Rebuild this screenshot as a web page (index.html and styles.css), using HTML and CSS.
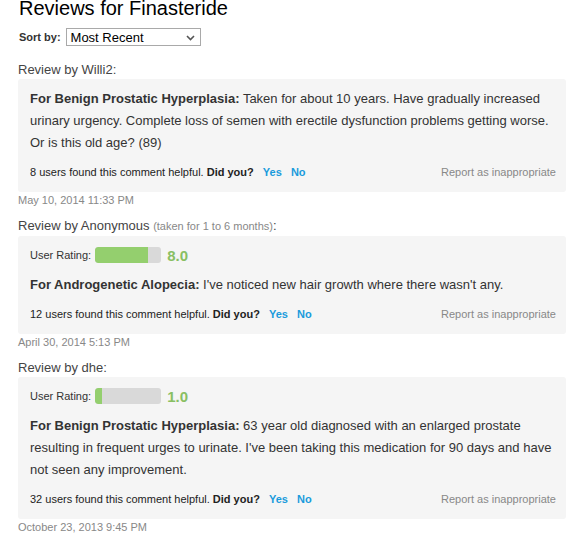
FILE: index.html
```html
<!DOCTYPE html>
<html>
<head>
  <title>Reviews for Finasteride</title>
  <link rel="stylesheet" href="styles.css">
</head>
<body>
  <h1 class="page-title">Reviews for Finasteride</h1>

  <div class="sort-row">
    <label for="sort">Sort by:</label>
    <div class="select-box">
      <span>Most Recent</span>
      <svg class="caret" width="9" height="6" viewBox="0 0 9 6"><path d="M1 1 L4.5 4.5 L8 1" fill="none" stroke="#555" stroke-width="1.6"/></svg>
    </div>
  </div>

  <!-- Review 1 -->
  <div class="review">
    <div class="review-by">Review by Willi2:</div>
    <div class="review-box">
      <p class="comment"><b>For Benign Prostatic Hyperplasia:</b> Taken for about 10 years. Have gradually increased urinary urgency. Complete loss of semen with erectile dysfunction problems getting worse. Or is this old age? (89)</p>
      <div class="helpful">
        <span>8 users found this comment helpful. <b>Did you?</b> <a class="vote">Yes</a> <a class="vote">No</a></span>
        <a class="report">Report as inappropriate</a>
      </div>
    </div>
    <div class="date">May 10, 2014 11:33 PM</div>
  </div>

  <!-- Review 2 -->
  <div class="review">
    <div class="review-by">Review by Anonymous <span class="taken">(taken for 1 to 6 months)</span>:</div>
    <div class="review-box">
      <div class="rating">
        <span class="rating-label">User Rating:</span>
        <span class="bar"><span class="bar-fill" style="width: 80%;"></span></span>
        <span class="score">8.0</span>
      </div>
      <p class="comment"><b>For Androgenetic Alopecia:</b> I've noticed new hair growth where there wasn't any.</p>
      <div class="helpful">
        <span>12 users found this comment helpful. <b>Did you?</b> <a class="vote">Yes</a> <a class="vote">No</a></span>
        <a class="report">Report as inappropriate</a>
      </div>
    </div>
    <div class="date">April 30, 2014 5:13 PM</div>
  </div>

  <!-- Review 3 -->
  <div class="review">
    <div class="review-by">Review by dhe:</div>
    <div class="review-box">
      <div class="rating">
        <span class="rating-label">User Rating:</span>
        <span class="bar"><span class="bar-fill" style="width: 10%;"></span></span>
        <span class="score">1.0</span>
      </div>
      <p class="comment"><b>For Benign Prostatic Hyperplasia:</b> 63 year old diagnosed with an enlarged prostate resulting in frequent urges to urinate. I've been taking this medication for 90 days and have not seen any improvement.</p>
      <div class="helpful">
        <span>32 users found this comment helpful. <b>Did you?</b> <a class="vote">Yes</a> <a class="vote">No</a></span>
        <a class="report">Report as inappropriate</a>
      </div>
    </div>
    <div class="date">October 23, 2013 9:45 PM</div>
  </div>
</body>
</html>
```

FILE: styles.css
```css
/* Base */
body {
  margin: 0;
  padding: 0 19px 0 18px;
  font-family: "Liberation Sans", Arial, sans-serif;
  color: #333;
  background: #fff;
}

/* Title */
.page-title {
  margin: -3px 0 0 1px;
  font-size: 20px;
  font-weight: normal;
  line-height: 22px;
  color: #000;
}

/* Sort select */
.sort-row {
  display: flex;
  align-items: center;
  gap: 5px;
  margin-top: 9px;
  margin-left: 1px;
}

.sort-row label {
  font-size: 11px;
  font-weight: bold;
  color: #333;
}

.select-box {
  display: flex;
  align-items: center;
  justify-content: space-between;
  width: 124px;
  height: 16px;
  padding: 0 5px 0 4px;
  border: 1px solid #a9a9a9;
  font-size: 13px;
  color: #000;
  background: #fff;
}

.caret {
  margin-top: 2px;
}

/* Reviews */
.review {
  margin-top: 16px;
}

.review + .review {
  margin-top: 11px;
}

.review-by {
  font-size: 13px;
  line-height: 15px;
  color: #444;
}

.taken {
  font-size: 11px;
  color: #888;
}

.review-box {
  margin-top: 2px;
  padding: 9px 10px 13px 12px;
  background: #f5f5f5;
  border-radius: 3px;
}

.comment {
  margin: 0;
  font-size: 13px;
  line-height: 22px;
  color: #333;
}

/* Rating */
.rating {
  display: flex;
  align-items: center;
  height: 20px;
  margin-bottom: 9px;
}

.rating-label {
  font-size: 11px;
  margin-right: 4px;
}

.bar {
  display: inline-block;
  width: 66px;
  height: 16px;
  border-radius: 3px;
  background: #d9d9d9;
  overflow: hidden;
}

.bar-fill {
  display: block;
  height: 100%;
  min-width: 6px;
  background: #94cf6e;
  border-radius: 3px 0 0 3px;
}

.score {
  margin-left: 6px;
  font-size: 15px;
  font-weight: bold;
  color: #89bf63;
}

/* Helpful row */
.helpful {
  display: flex;
  justify-content: space-between;
  align-items: center;
  margin-top: 11px;
  font-size: 11px;
  line-height: 14px;
  color: #222;
}

.vote {
  margin-left: 6px;
  font-weight: bold;
  color: #1a9bdc;
}

.report {
  color: #888;
}

.date {
  margin-top: 2px;
  font-size: 11px;
  line-height: 13px;
  color: #888;
}
```
